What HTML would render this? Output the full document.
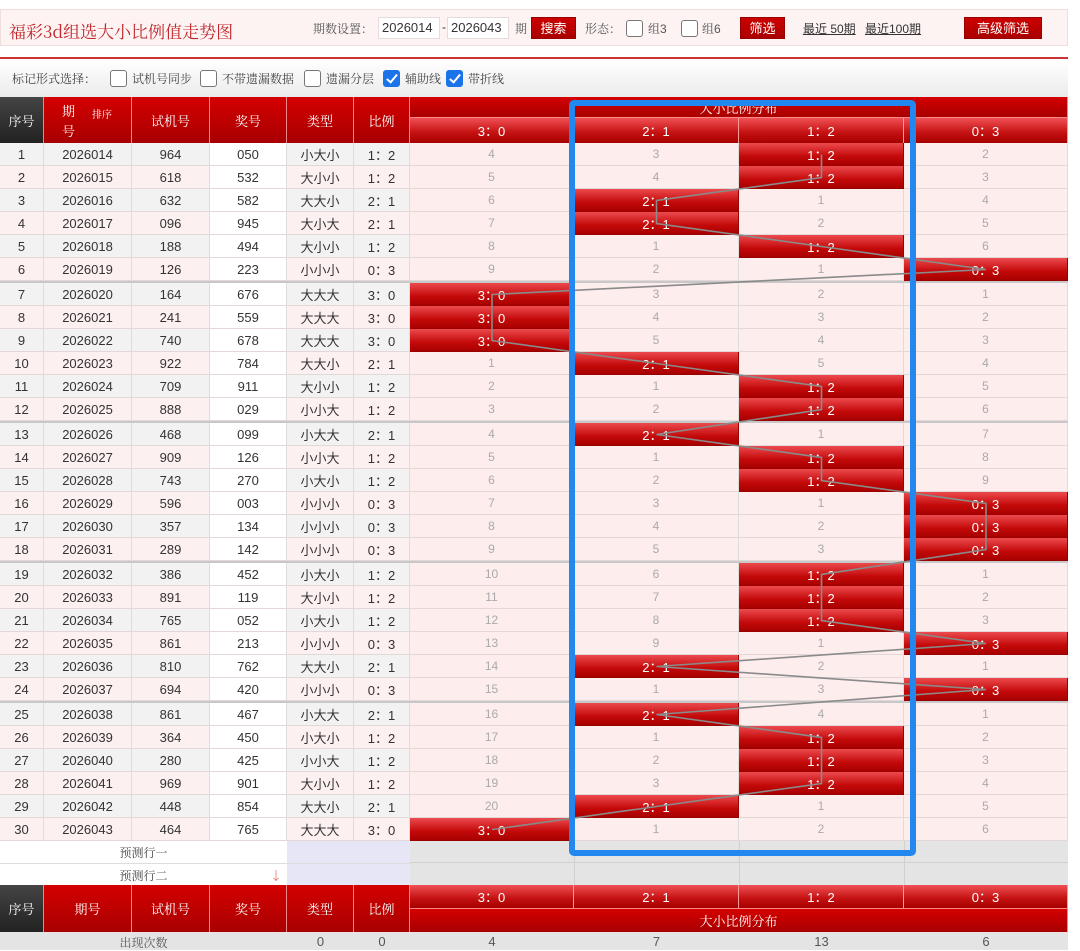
<!DOCTYPE html>
<html><head><meta charset="utf-8">
<style>
*{margin:0;padding:0;box-sizing:border-box}
body{width:1080px;height:950px;background:#fff;position:relative;overflow:hidden;font-family:"Liberation Sans","Noto Sans CJK SC",sans-serif;font-size:13px;color:#333}
.top{position:absolute;left:0;top:9px;width:1068px;height:37px;background:#fdf3f3;border:1px solid #f0dede}
.title{position:absolute;left:8px;top:8px;font-size:17px;color:#c0282d;font-family:"Noto Serif CJK SC","Noto Sans CJK SC",serif}
.t{position:absolute;top:10px;font-size:12px;color:#555;font-family:"Liberation Sans","Noto Serif CJK SC",serif}
.inp{position:absolute;top:7px;height:22px;width:62px;background:#fff;border:1px solid #e6dcdc;font-size:13px;line-height:20px;padding-left:3px;color:#333}
.btn{position:absolute;top:7px;height:22px;background:linear-gradient(#c00,#a00);color:#fff;font-size:13px;line-height:22px;text-align:center;border:1px solid #900}
.cb{position:absolute;width:17px;height:17px;border:1px solid #777;border-radius:3px;background:#fff}
.cb.on{background:#1a73e8;border-color:#1a73e8}
.cb.on:after{content:"";position:absolute;left:5px;top:1px;width:4px;height:9px;border:solid #fff;border-width:0 2px 2px 0;transform:rotate(40deg)}
.lk{position:absolute;top:10px;font-size:12px;color:#333;text-decoration:underline}
.redline{position:absolute;left:0;top:57px;width:1068px;height:2px;background:#c33}
.opt{position:absolute;left:0;top:60px;width:1068px;height:37px;background:linear-gradient(#fff,#ebebeb)}
.opt span{position:absolute;top:10px;font-size:12px;color:#444;font-family:"Liberation Sans","Noto Serif CJK SC",serif}
.r{position:absolute;left:0;width:1068px;height:23px;display:flex}
.r.g{height:25px;border-top:2px solid #c8c8c8}
.r>*{height:100%;display:flex;align-items:center;justify-content:center;border-right:1px solid #ddd;border-bottom:1px solid #e2d8d8;font-style:normal;font-weight:normal}
.r>:nth-child(1){width:44px}.r>:nth-child(2){width:88px}.r>:nth-child(3){width:78px}.r>:nth-child(4){width:77px}.r>:nth-child(5){width:67px}.r>:nth-child(6){width:56px}
.r>:nth-child(7){width:164px}.r>:nth-child(8){width:165px}.r>:nth-child(9){width:165px}.r>:nth-child(10){width:164px}
.r i{background:#fdf0f0}
.r.o i{background:#f2f2f2}
.r i.w{background:#fff}
.r b{background:#fdeded;color:#aaa;font-size:12px}
.r b.h{background:linear-gradient(#ec4a4e,#c40a0a 60%,#a80000);color:#fff;font-size:13px;border-right-color:#900;border-bottom-color:#900}
.hd{position:absolute;display:flex;align-items:center;justify-content:center;color:#fff;font-size:13px;font-family:"Noto Serif CJK SC",serif;background:linear-gradient(#d40000,#a80000);border-right:1px solid #e88}
.hd.k{background:linear-gradient(#444,#222)}
.sh{position:absolute;display:flex;align-items:center;justify-content:center;color:#fff;font-size:13px;background:linear-gradient(#f05055,#c31010 60%,#a50000);border-right:1px solid #f99}
.pr{position:absolute;height:23px;display:flex;align-items:center;justify-content:center;font-size:12px;color:#444;border-bottom:1px solid #ddd;font-family:"Noto Serif CJK SC",serif}
</style></head><body>
<div class="top">
<div class="title">福彩3d组选大小比例值走势图</div>
<div class="t" style="left:312px">期数设置：</div>
<div class="inp" style="left:377px">2026014</div>
<div class="t" style="left:441px;color:#333">-</div>
<div class="inp" style="left:446px">2026043</div>
<div class="t" style="left:514px">期</div>
<div class="btn" style="left:530px;width:45px">搜索</div>
<div class="t" style="left:584px">形态：</div>
<div class="cb" style="left:625px;top:10px"></div>
<div class="t" style="left:647px">组3</div>
<div class="cb" style="left:680px;top:10px"></div>
<div class="t" style="left:701px">组6</div>
<div class="btn" style="left:739px;width:45px">筛选</div>
<div class="lk" style="left:802px">最近 50期</div>
<div class="lk" style="left:864px">最近100期</div>
<div class="btn" style="left:963px;width:78px">高级筛选</div>
</div>
<div class="redline"></div>
<div class="opt">
<span style="left:12px">标记形式选择：</span>
<div class="cb" style="left:110px;top:10px"></div><span style="left:132px">试机号同步</span>
<div class="cb" style="left:200px;top:10px"></div><span style="left:222px">不带遗漏数据</span>
<div class="cb" style="left:304px;top:10px"></div><span style="left:326px">遗漏分层</span>
<div class="cb on" style="left:383px;top:10px"></div><span style="left:405px">辅助线</span>
<div class="cb on" style="left:446px;top:10px"></div><span style="left:468px">带折线</span>
</div>

<div class="hd k" style="left:0;top:97px;width:44px;height:46px">序号</div>
<div class="hd" style="left:44px;top:97px;width:88px;height:46px"><span style="position:absolute;left:18px;top:4px">期</span><span style="position:absolute;left:18px;top:24px">号</span><span style="position:absolute;left:48px;top:9px;font-size:10px">排序</span></div>
<div class="hd" style="left:132px;top:97px;width:78px;height:46px">试机号</div>
<div class="hd" style="left:210px;top:97px;width:77px;height:46px">奖号</div>
<div class="hd" style="left:287px;top:97px;width:67px;height:46px">类型</div>
<div class="hd" style="left:354px;top:97px;width:56px;height:46px">比例</div>
<div class="hd" style="left:410px;top:97px;width:658px;height:21px;border-bottom:1px solid #f88">大小比例分布</div>
<div class="sh" style="left:410px;top:118px;width:164px;height:25px">3：0</div>
<div class="sh" style="left:574px;top:118px;width:165px;height:25px">2：1</div>
<div class="sh" style="left:739px;top:118px;width:165px;height:25px">1：2</div>
<div class="sh" style="left:904px;top:118px;width:164px;height:25px">0：3</div>

<div class="r o" style="top:143px"><i>1</i><i>2026014</i><i>964</i><i class="w">050</i><i>小大小</i><i>1：2</i><b>4</b><b>3</b><b class="h">1：2</b><b>2</b></div>
<div class="r" style="top:166px"><i>2</i><i>2026015</i><i>618</i><i class="w">532</i><i>大小小</i><i>1：2</i><b>5</b><b>4</b><b class="h">1：2</b><b>3</b></div>
<div class="r o" style="top:189px"><i>3</i><i>2026016</i><i>632</i><i class="w">582</i><i>大大小</i><i>2：1</i><b>6</b><b class="h">2：1</b><b>1</b><b>4</b></div>
<div class="r" style="top:212px"><i>4</i><i>2026017</i><i>096</i><i class="w">945</i><i>大小大</i><i>2：1</i><b>7</b><b class="h">2：1</b><b>2</b><b>5</b></div>
<div class="r o" style="top:235px"><i>5</i><i>2026018</i><i>188</i><i class="w">494</i><i>大小小</i><i>1：2</i><b>8</b><b>1</b><b class="h">1：2</b><b>6</b></div>
<div class="r" style="top:258px"><i>6</i><i>2026019</i><i>126</i><i class="w">223</i><i>小小小</i><i>0：3</i><b>9</b><b>2</b><b>1</b><b class="h">0：3</b></div>

<div class="r o g" style="top:281px"><i>7</i><i>2026020</i><i>164</i><i class="w">676</i><i>大大大</i><i>3：0</i><b class="h">3：0</b><b>3</b><b>2</b><b>1</b></div>
<div class="r" style="top:306px"><i>8</i><i>2026021</i><i>241</i><i class="w">559</i><i>大大大</i><i>3：0</i><b class="h">3：0</b><b>4</b><b>3</b><b>2</b></div>
<div class="r o" style="top:329px"><i>9</i><i>2026022</i><i>740</i><i class="w">678</i><i>大大大</i><i>3：0</i><b class="h">3：0</b><b>5</b><b>4</b><b>3</b></div>
<div class="r" style="top:352px"><i>10</i><i>2026023</i><i>922</i><i class="w">784</i><i>大大小</i><i>2：1</i><b>1</b><b class="h">2：1</b><b>5</b><b>4</b></div>
<div class="r o" style="top:375px"><i>11</i><i>2026024</i><i>709</i><i class="w">911</i><i>大小小</i><i>1：2</i><b>2</b><b>1</b><b class="h">1：2</b><b>5</b></div>
<div class="r" style="top:398px"><i>12</i><i>2026025</i><i>888</i><i class="w">029</i><i>小小大</i><i>1：2</i><b>3</b><b>2</b><b class="h">1：2</b><b>6</b></div>

<div class="r o g" style="top:421px"><i>13</i><i>2026026</i><i>468</i><i class="w">099</i><i>小大大</i><i>2：1</i><b>4</b><b class="h">2：1</b><b>1</b><b>7</b></div>
<div class="r" style="top:446px"><i>14</i><i>2026027</i><i>909</i><i class="w">126</i><i>小小大</i><i>1：2</i><b>5</b><b>1</b><b class="h">1：2</b><b>8</b></div>
<div class="r o" style="top:469px"><i>15</i><i>2026028</i><i>743</i><i class="w">270</i><i>小大小</i><i>1：2</i><b>6</b><b>2</b><b class="h">1：2</b><b>9</b></div>
<div class="r" style="top:492px"><i>16</i><i>2026029</i><i>596</i><i class="w">003</i><i>小小小</i><i>0：3</i><b>7</b><b>3</b><b>1</b><b class="h">0：3</b></div>
<div class="r o" style="top:515px"><i>17</i><i>2026030</i><i>357</i><i class="w">134</i><i>小小小</i><i>0：3</i><b>8</b><b>4</b><b>2</b><b class="h">0：3</b></div>
<div class="r" style="top:538px"><i>18</i><i>2026031</i><i>289</i><i class="w">142</i><i>小小小</i><i>0：3</i><b>9</b><b>5</b><b>3</b><b class="h">0：3</b></div>

<div class="r o g" style="top:561px"><i>19</i><i>2026032</i><i>386</i><i class="w">452</i><i>小大小</i><i>1：2</i><b>10</b><b>6</b><b class="h">1：2</b><b>1</b></div>
<div class="r" style="top:586px"><i>20</i><i>2026033</i><i>891</i><i class="w">119</i><i>大小小</i><i>1：2</i><b>11</b><b>7</b><b class="h">1：2</b><b>2</b></div>
<div class="r o" style="top:609px"><i>21</i><i>2026034</i><i>765</i><i class="w">052</i><i>小大小</i><i>1：2</i><b>12</b><b>8</b><b class="h">1：2</b><b>3</b></div>
<div class="r" style="top:632px"><i>22</i><i>2026035</i><i>861</i><i class="w">213</i><i>小小小</i><i>0：3</i><b>13</b><b>9</b><b>1</b><b class="h">0：3</b></div>
<div class="r o" style="top:655px"><i>23</i><i>2026036</i><i>810</i><i class="w">762</i><i>大大小</i><i>2：1</i><b>14</b><b class="h">2：1</b><b>2</b><b>1</b></div>
<div class="r" style="top:678px"><i>24</i><i>2026037</i><i>694</i><i class="w">420</i><i>小小小</i><i>0：3</i><b>15</b><b>1</b><b>3</b><b class="h">0：3</b></div>

<div class="r o g" style="top:701px"><i>25</i><i>2026038</i><i>861</i><i class="w">467</i><i>小大大</i><i>2：1</i><b>16</b><b class="h">2：1</b><b>4</b><b>1</b></div>
<div class="r" style="top:726px"><i>26</i><i>2026039</i><i>364</i><i class="w">450</i><i>小大小</i><i>1：2</i><b>17</b><b>1</b><b class="h">1：2</b><b>2</b></div>
<div class="r o" style="top:749px"><i>27</i><i>2026040</i><i>280</i><i class="w">425</i><i>小小大</i><i>1：2</i><b>18</b><b>2</b><b class="h">1：2</b><b>3</b></div>
<div class="r" style="top:772px"><i>28</i><i>2026041</i><i>969</i><i class="w">901</i><i>大小小</i><i>1：2</i><b>19</b><b>3</b><b class="h">1：2</b><b>4</b></div>
<div class="r o" style="top:795px"><i>29</i><i>2026042</i><i>448</i><i class="w">854</i><i>大大小</i><i>2：1</i><b>20</b><b class="h">2：1</b><b>1</b><b>5</b></div>
<div class="r" style="top:818px"><i>30</i><i>2026043</i><i>464</i><i class="w">765</i><i>大大大</i><i>3：0</i><b class="h">3：0</b><b>1</b><b>2</b><b>6</b></div>

<svg style="position:absolute;left:0;top:0" width="1080" height="950">
<polyline fill="none" stroke="#8a8a8a" stroke-width="1.6" points="821.5,154.5 821.5,177.5 656.5,200.5 656.5,223.5 821.5,246.5 986,269.5 492,294.5 492,317.5 492,340.5 656.5,363.5 821.5,386.5 821.5,409.5 656.5,434.5 821.5,457.5 821.5,480.5 986,503.5 986,526.5 986,549.5 821.5,574.5 821.5,597.5 821.5,620.5 986,643.5 656.5,666.5 986,689.5 656.5,714.5 821.5,737.5 821.5,760.5 821.5,783.5 656.5,806.5 492,829.5"/>
</svg>

<div class="pr" style="left:0;top:841px;width:287px;background:#fff">预测行一</div>
<div class="pr" style="left:287px;top:841px;width:123px;background:#e6e6f6"></div>
<div class="pr" style="left:0;top:864px;width:287px;background:#fff">预测行二<span style="position:absolute;left:270px;color:#d33;font-size:12px">↓</span></div>
<div class="pr" style="left:287px;top:864px;width:123px;background:#e6e6f6"></div>
<div style="position:absolute;left:410px;top:841px;width:658px;height:44px;background:#e4e4e4;
background-image:linear-gradient(90deg,transparent 164px,#d0d0d0 164px,#d0d0d0 165px,transparent 165px,transparent 329px,#d0d0d0 329px,#d0d0d0 330px,transparent 330px,transparent 494px,#d0d0d0 494px,#d0d0d0 495px,transparent 495px)"></div>
<div style="position:absolute;left:410px;top:862px;width:658px;height:1px;background:#d0d0d0"></div>

<div class="hd k" style="left:0;top:885px;width:44px;height:47px">序号</div>
<div class="hd" style="left:44px;top:885px;width:88px;height:47px">期号</div>
<div class="hd" style="left:132px;top:885px;width:78px;height:47px">试机号</div>
<div class="hd" style="left:210px;top:885px;width:77px;height:47px">奖号</div>
<div class="hd" style="left:287px;top:885px;width:67px;height:47px">类型</div>
<div class="hd" style="left:354px;top:885px;width:56px;height:47px">比例</div>
<div class="sh" style="left:410px;top:885px;width:164px;height:23px">3：0</div>
<div class="sh" style="left:574px;top:885px;width:165px;height:23px">2：1</div>
<div class="sh" style="left:739px;top:885px;width:165px;height:23px">1：2</div>
<div class="sh" style="left:904px;top:885px;width:164px;height:23px">0：3</div>
<div class="hd" style="left:410px;top:908px;width:658px;height:24px;border-top:1px solid #f88">大小比例分布</div>

<div style="position:absolute;left:0;top:932px;width:1068px;height:18px;background:#e4e4e4;color:#555;font-size:13px">
<span style="position:absolute;left:0;width:287px;text-align:center;top:2px;font-family:'Noto Serif CJK SC',serif;font-size:12px">出现次数</span>
<span style="position:absolute;left:287px;width:67px;text-align:center;top:2px">0</span>
<span style="position:absolute;left:354px;width:56px;text-align:center;top:2px">0</span>
<span style="position:absolute;left:410px;width:164px;text-align:center;top:2px">4</span>
<span style="position:absolute;left:574px;width:165px;text-align:center;top:2px">7</span>
<span style="position:absolute;left:739px;width:165px;text-align:center;top:2px">13</span>
<span style="position:absolute;left:904px;width:164px;text-align:center;top:2px">6</span>
</div>

<div style="position:absolute;left:569px;top:100px;width:347px;height:756px;border:6px solid #2288f0;border-radius:5px"></div>
</body></html>
